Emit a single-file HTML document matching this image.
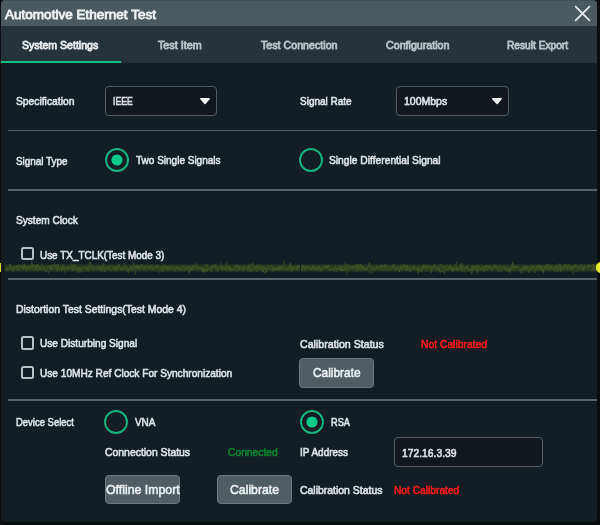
<!DOCTYPE html>
<html><head><meta charset="utf-8"><title>Automotive Ethernet Test</title>
<style>html,body{margin:0;padding:0;}body{width:600px;height:525px;overflow:hidden;position:relative;background:#0a0e10;font-family:"Liberation Sans",sans-serif;}</style>
</head><body>
<div style="position:absolute;left:1px;top:0px;width:596px;height:522px;background:#121e24;border-radius:4px;"></div>
<div style="position:absolute;left:1px;top:0px;width:596px;height:26px;box-sizing:border-box;background:#495b5e;border-top:1px solid #3e5154;border-radius:4px 4px 0 0;"></div>
<div style="position:absolute;left:1px;top:26px;width:596px;height:37px;background:#24343a;"></div>
<div style="position:absolute;left:1px;top:60.5px;width:119.5px;height:2.5px;background:#14c483;"></div>
<svg style="position:absolute;left:0;top:0" width="600" height="525"><defs><filter id="bl" x="-1%" y="-50%" width="102%" height="200%"><feGaussianBlur stdDeviation="0.7"/></filter></defs><g filter="url(#bl)"><rect x="0" y="264.5" width="597" height="7" fill="#2f3d1f" opacity="0.8"/><polyline points="0.0,268.2 1.1,270.1 2.2,266.4 3.3,269.7 4.4,267.6 5.5,267.6 6.6,271.2 7.7,268.3 8.8,267.9 9.9,269.2 11.0,269.9 12.1,267.9 13.2,269.0 14.3,266.3 15.4,267.4 16.5,267.3 17.6,265.7 18.7,265.4 19.8,265.2 20.9,267.6 22.0,267.7 23.1,267.5 24.2,268.1 25.3,265.7 26.4,267.9 27.5,268.4 28.6,269.3 29.7,266.6 30.8,267.3 31.9,264.6 33.0,267.1 34.1,264.3 35.2,265.6 36.3,269.9 37.4,264.3 38.5,269.4 39.6,268.6 40.7,267.5 41.8,268.8 42.9,268.9 44.0,269.8 45.1,267.6 46.2,267.0 47.3,267.0 48.4,266.3 49.5,267.9 50.6,266.7 51.7,269.8 52.8,264.8 53.9,266.1 55.0,266.4 56.1,264.4 57.2,271.2 58.3,263.9 59.4,267.5 60.5,267.1 61.6,270.8 62.7,264.6 63.8,269.8 64.9,266.8 66.0,267.7 67.1,266.9 68.2,269.1 69.3,266.1 70.4,267.9 71.5,268.6 72.6,271.1 73.7,263.9 74.8,270.6 75.9,269.6 77.0,267.2 78.1,268.5 79.2,267.2 80.3,270.8 81.4,268.4 82.5,267.6 83.6,267.6 84.7,267.7 85.8,267.7 86.9,266.5 88.0,271.5 89.1,264.8 90.2,261.9 91.3,267.8 92.4,267.8 93.5,268.6 94.6,267.7 95.7,267.7 96.8,268.6 97.9,269.6 99.0,267.2 100.1,267.4 101.2,271.3 102.3,268.9 103.4,266.3 104.5,272.0 105.6,269.3 106.7,267.0 107.8,266.0 108.9,268.5 110.0,266.6 111.1,266.2 112.2,265.8 113.3,267.1 114.4,269.9 115.5,267.3 116.6,265.5 117.7,269.1 118.8,268.1 119.9,269.4 121.0,270.0 122.1,267.7 123.2,267.8 124.3,267.9 125.4,266.1 126.5,269.1 127.6,270.3 128.7,268.3 129.8,267.6 130.9,267.6 132.0,266.7 133.1,266.6 134.2,267.3 135.3,266.6 136.4,267.3 137.5,265.3 138.6,268.6 139.7,268.1 140.8,266.0 141.9,264.1 143.0,268.0 144.1,269.9 145.2,266.8 146.3,267.2 147.4,267.0 148.5,269.1 149.6,266.4 150.7,269.7 151.8,267.5 152.9,269.6 154.0,268.1 155.1,267.6 156.2,265.5 157.3,266.8 158.4,267.6 159.5,269.1 160.6,268.4 161.7,266.8 162.8,268.7 163.9,269.7 165.0,267.7 166.1,267.3 167.2,267.3 168.3,269.4 169.4,268.9 170.5,266.4 171.6,268.6 172.7,267.2 173.8,266.7 174.9,270.1 176.0,269.4 177.1,266.8 178.2,268.1 179.3,268.9 180.4,266.9 181.5,267.8 182.6,269.1 183.7,265.0 184.8,268.6 185.9,269.3 187.0,268.9 188.1,265.7 189.2,268.5 190.3,266.5 191.4,269.0 192.5,269.0 193.6,268.4 194.7,266.7 195.8,267.0 196.9,269.5 198.0,266.5 199.1,268.8 200.2,268.9 201.3,267.5 202.4,272.1 203.5,268.1 204.6,271.6 205.7,264.6 206.8,264.2 207.9,269.7 209.0,269.1 210.1,267.5 211.2,267.9 212.3,264.8 213.4,266.9 214.5,266.2 215.6,267.6 216.7,269.5 217.8,268.1 218.9,268.6 220.0,266.8 221.1,267.3 222.2,268.2 223.3,267.5 224.4,270.2 225.5,266.5 226.6,271.2 227.7,266.3 228.8,269.8 229.9,266.7 231.0,270.8 232.1,268.2 233.2,268.7 234.3,269.3 235.4,266.9 236.5,266.2 237.6,264.6 238.7,270.1 239.8,266.8 240.9,267.0 242.0,267.9 243.1,271.4 244.2,265.1 245.3,268.4 246.4,267.3 247.5,268.9 248.6,264.9 249.7,267.3 250.8,269.4 251.9,270.7 253.0,270.7 254.1,266.5 255.2,268.1 256.3,267.8 257.4,265.7 258.5,265.6 259.6,269.3 260.7,268.4 261.8,267.8 262.9,270.1 264.0,266.3 265.1,268.9 266.2,268.0 267.3,267.9 268.4,268.8 269.5,268.3 270.6,268.5 271.7,268.5 272.8,271.3 273.9,267.5 275.0,269.7 276.1,269.0 277.2,267.4 278.3,269.4 279.4,266.5 280.5,270.0 281.6,266.6 282.7,267.2 283.8,268.5 284.9,269.4 286.0,269.5 287.1,269.5 288.2,267.6 289.3,266.4 290.4,268.9 291.5,268.5 292.6,266.4 293.7,269.7 294.8,268.3 295.9,266.4 297.0,268.8 298.1,265.7 299.2,266.5 300.3,268.7 301.4,265.4 302.5,268.1 303.6,265.7 304.7,269.3 305.8,266.8 306.9,268.3 308.0,265.4 309.1,267.4 310.2,269.6 311.3,268.8 312.4,264.9 313.5,269.6 314.6,269.5 315.7,267.4 316.8,270.4 317.9,266.2 319.0,267.9 320.1,269.9 321.2,270.2 322.3,270.2 323.4,266.1 324.5,265.0 325.6,268.7 326.7,265.6 327.8,267.8 328.9,265.8 330.0,269.8 331.1,269.4 332.2,268.9 333.3,268.0 334.4,268.1 335.5,267.5 336.6,268.7 337.7,268.4 338.8,268.8 339.9,267.3 341.0,271.2 342.1,268.5 343.2,270.4 344.3,270.3 345.4,266.5 346.5,265.1 347.6,270.1 348.7,267.3 349.8,268.1 350.9,267.6 352.0,268.2 353.1,266.0 354.2,267.8 355.3,267.2 356.4,268.0 357.5,264.0 358.6,269.4 359.7,268.6 360.8,265.1 361.9,266.8 363.0,268.1 364.1,269.1 365.2,268.0 366.3,270.4 367.4,268.0 368.5,266.3 369.6,266.9 370.7,269.3 371.8,267.0 372.9,269.4 374.0,269.7 375.1,269.0 376.2,269.7 377.3,267.7 378.4,268.0 379.5,267.0 380.6,267.0 381.7,265.3 382.8,267.1 383.9,266.2 385.0,265.6 386.1,268.2 387.2,268.8 388.3,267.4 389.4,270.3 390.5,269.6 391.6,269.8 392.7,267.0 393.8,265.5 394.9,268.9 396.0,268.5 397.1,269.2 398.2,268.7 399.3,270.1 400.4,267.5 401.5,269.1 402.6,266.5 403.7,264.1 404.8,267.2 405.9,270.5 407.0,265.2 408.1,269.7 409.2,266.8 410.3,267.3 411.4,268.1 412.5,268.4 413.6,266.3 414.7,268.2 415.8,268.8 416.9,269.4 418.0,266.7 419.1,270.6 420.2,271.2 421.3,272.1 422.4,265.7 423.5,268.3 424.6,264.8 425.7,268.6 426.8,268.9 427.9,266.0 429.0,265.3 430.1,268.3 431.2,269.1 432.3,266.7 433.4,267.6 434.5,263.7 435.6,266.8 436.7,268.2 437.8,268.3 438.9,270.7 440.0,266.1 441.1,264.2 442.2,268.8 443.3,267.0 444.4,268.5 445.5,269.2 446.6,269.0 447.7,270.5 448.8,270.3 449.9,265.2 451.0,267.9 452.1,271.4 453.2,267.3 454.3,269.6 455.4,267.9 456.5,267.3 457.6,270.7 458.7,269.8 459.8,267.6 460.9,269.5 462.0,265.8 463.1,266.8 464.2,269.5 465.3,268.1 466.4,266.2 467.5,268.8 468.6,268.6 469.7,270.2 470.8,269.6 471.9,267.5 473.0,267.2 474.1,267.8 475.2,267.6 476.3,270.5 477.4,270.7 478.5,270.3 479.6,268.6 480.7,267.6 481.8,269.5 482.9,267.4 484.0,268.4 485.1,265.2 486.2,267.3 487.3,270.4 488.4,266.3 489.5,265.5 490.6,267.7 491.7,270.8 492.8,270.5 493.9,267.4 495.0,267.2 496.1,267.8 497.2,266.4 498.3,268.1 499.4,267.5 500.5,265.5 501.6,267.0 502.7,267.6 503.8,266.5 504.9,266.1 506.0,269.5 507.1,271.2 508.2,267.5 509.3,267.3 510.4,268.9 511.5,267.6 512.6,266.7 513.7,270.4 514.8,266.2 515.9,266.8 517.0,266.9 518.1,266.5 519.2,267.6 520.3,269.0 521.4,270.5 522.5,269.1 523.6,268.1 524.7,265.9 525.8,267.9 526.9,266.4 528.0,267.8 529.1,269.7 530.2,268.3 531.3,267.6 532.4,266.7 533.5,268.0 534.6,268.2 535.7,266.4 536.8,267.1 537.9,269.5 539.0,265.2 540.1,267.2 541.2,266.0 542.3,270.6 543.4,269.0 544.5,268.9 545.6,268.7 546.7,268.5 547.8,268.5 548.9,265.3 550.0,268.4 551.1,269.0 552.2,265.6 553.3,269.4 554.4,269.1 555.5,265.4 556.6,267.2 557.7,267.5 558.8,267.1 559.9,268.7 561.0,265.8 562.1,267.6 563.2,268.4 564.3,269.2 565.4,268.1 566.5,267.6 567.6,269.2 568.7,264.6 569.8,269.6 570.9,267.5 572.0,265.9 573.1,267.3 574.2,264.9 575.3,264.5 576.4,267.4 577.5,266.7 578.6,269.2 579.7,266.5 580.8,265.8 581.9,266.4 583.0,270.9 584.1,268.0 585.2,267.0 586.3,266.3 587.4,266.1 588.5,267.7 589.6,268.7 590.7,270.0 591.8,269.9 592.9,268.5 594.0,266.9 595.1,266.5 596.2,264.1" fill="none" stroke="#465826" stroke-width="1" opacity="0.8"/><polyline points="0.0,266.0 1.1,268.8 2.2,267.3 3.3,268.7 4.4,265.3 5.5,269.8 6.6,268.6 7.7,268.1 8.8,268.8 9.9,263.5 11.0,266.9 12.1,266.2 13.2,271.6 14.3,267.6 15.4,267.0 16.5,269.7 17.6,265.9 18.7,270.8 19.8,266.6 20.9,267.9 22.0,266.2 23.1,269.6 24.2,263.7 25.3,269.4 26.4,266.4 27.5,268.1 28.6,265.7 29.7,268.5 30.8,268.4 31.9,269.2 33.0,268.6 34.1,269.2 35.2,270.0 36.3,267.2 37.4,265.6 38.5,265.4 39.6,269.4 40.7,267.2 41.8,270.1 42.9,268.1 44.0,266.0 45.1,269.8 46.2,271.9 47.3,267.6 48.4,266.1 49.5,266.3 50.6,269.8 51.7,266.8 52.8,267.2 53.9,269.4 55.0,268.0 56.1,268.2 57.2,266.9 58.3,266.7 59.4,268.3 60.5,268.3 61.6,269.2 62.7,267.0 63.8,268.7 64.9,269.0 66.0,268.2 67.1,269.1 68.2,270.0 69.3,268.4 70.4,268.2 71.5,266.1 72.6,268.7 73.7,267.8 74.8,267.4 75.9,266.3 77.0,269.1 78.1,273.1 79.2,268.9 80.3,268.2 81.4,268.9 82.5,266.8 83.6,268.2 84.7,266.7 85.8,266.7 86.9,268.5 88.0,268.5 89.1,267.8 90.2,266.4 91.3,268.5 92.4,265.8 93.5,269.5 94.6,267.3 95.7,268.0 96.8,269.6 97.9,269.1 99.0,265.4 100.1,267.5 101.2,268.7 102.3,265.8 103.4,263.2 104.5,267.9 105.6,267.9 106.7,268.9 107.8,268.2 108.9,268.3 110.0,268.5 111.1,270.7 112.2,269.0 113.3,269.1 114.4,267.2 115.5,270.2 116.6,267.6 117.7,269.5 118.8,263.8 119.9,268.5 121.0,267.8 122.1,267.1 123.2,270.6 124.3,268.8 125.4,267.7 126.5,267.0 127.6,271.8 128.7,269.5 129.8,269.3 130.9,266.5 132.0,270.6 133.1,269.1 134.2,267.5 135.3,267.8 136.4,264.8 137.5,269.3 138.6,265.8 139.7,269.7 140.8,267.1 141.9,266.8 143.0,268.7 144.1,268.4 145.2,265.7 146.3,267.9 147.4,269.2 148.5,267.5 149.6,265.3 150.7,267.5 151.8,266.1 152.9,266.8 154.0,268.1 155.1,267.9 156.2,267.6 157.3,264.7 158.4,268.7 159.5,267.6 160.6,267.2 161.7,268.3 162.8,271.8 163.9,265.4 165.0,264.8 166.1,269.5 167.2,266.4 168.3,270.6 169.4,266.0 170.5,267.0 171.6,269.7 172.7,269.8 173.8,268.9 174.9,268.9 176.0,267.7 177.1,267.1 178.2,267.6 179.3,270.5 180.4,269.4 181.5,268.0 182.6,268.6 183.7,269.7 184.8,270.4 185.9,267.7 187.0,267.8 188.1,268.7 189.2,273.2 190.3,268.5 191.4,270.5 192.5,264.9 193.6,269.7 194.7,265.2 195.8,265.9 196.9,266.7 198.0,267.7 199.1,268.4 200.2,268.7 201.3,268.4 202.4,267.1 203.5,273.2 204.6,268.8 205.7,269.3 206.8,272.0 207.9,269.9 209.0,269.1 210.1,268.6 211.2,271.7 212.3,265.9 213.4,266.1 214.5,268.3 215.6,264.0 216.7,266.5 217.8,270.2 218.9,267.1 220.0,268.3 221.1,269.4 222.2,265.7 223.3,268.5 224.4,266.8 225.5,265.8 226.6,267.5 227.7,267.9 228.8,267.2 229.9,266.7 231.0,269.9 232.1,270.3 233.2,269.1 234.3,267.8 235.4,265.9 236.5,266.4 237.6,265.8 238.7,268.4 239.8,269.8 240.9,269.8 242.0,268.0 243.1,267.2 244.2,268.4 245.3,268.2 246.4,269.2 247.5,270.9 248.6,266.6 249.7,272.1 250.8,263.8 251.9,264.5 253.0,265.0 254.1,266.0 255.2,267.5 256.3,272.1 257.4,266.6 258.5,270.2 259.6,267.3 260.7,268.3 261.8,266.0 262.9,272.5 264.0,267.9 265.1,266.8 266.2,272.5 267.3,268.4 268.4,268.8 269.5,267.7 270.6,266.4 271.7,265.2 272.8,267.7 273.9,271.2 275.0,268.8 276.1,267.7 277.2,270.1 278.3,266.2 279.4,270.7 280.5,268.0 281.6,266.4 282.7,269.3 283.8,269.0 284.9,267.3 286.0,268.4 287.1,269.9 288.2,270.8 289.3,266.3 290.4,262.8 291.5,272.1 292.6,267.5 293.7,267.2 294.8,268.9 295.9,267.2 297.0,270.1 298.1,265.5 299.2,267.6 300.3,265.5 301.4,271.0 302.5,267.5 303.6,270.2 304.7,270.7 305.8,265.6 306.9,267.6 308.0,269.4 309.1,268.1 310.2,267.7 311.3,269.7 312.4,269.8 313.5,266.8 314.6,267.7 315.7,269.3 316.8,268.4 317.9,268.3 319.0,265.8 320.1,271.5 321.2,267.5 322.3,268.5 323.4,267.9 324.5,268.1 325.6,268.3 326.7,266.3 327.8,268.7 328.9,270.4 330.0,268.8 331.1,269.4 332.2,269.0 333.3,268.1 334.4,271.6 335.5,266.6 336.6,268.8 337.7,270.0 338.8,268.6 339.9,265.9 341.0,265.8 342.1,271.1 343.2,266.1 344.3,268.0 345.4,269.1 346.5,268.2 347.6,264.5 348.7,264.2 349.8,267.8 350.9,266.5 352.0,267.5 353.1,268.2 354.2,268.3 355.3,265.3 356.4,264.7 357.5,269.9 358.6,266.8 359.7,265.7 360.8,264.0 361.9,269.1 363.0,265.5 364.1,265.9 365.2,269.2 366.3,268.6 367.4,269.1 368.5,265.5 369.6,262.3 370.7,266.0 371.8,267.4 372.9,266.7 374.0,269.8 375.1,268.7 376.2,265.9 377.3,269.1 378.4,267.7 379.5,267.0 380.6,270.2 381.7,264.7 382.8,270.1 383.9,270.2 385.0,263.9 386.1,267.6 387.2,267.7 388.3,265.7 389.4,266.9 390.5,266.4 391.6,268.1 392.7,266.9 393.8,263.7 394.9,270.4 396.0,269.8 397.1,266.3 398.2,269.7 399.3,272.0 400.4,264.9 401.5,267.2 402.6,267.0 403.7,269.1 404.8,267.4 405.9,265.2 407.0,270.5 408.1,267.4 409.2,269.5 410.3,272.6 411.4,266.5 412.5,267.2 413.6,269.8 414.7,267.8 415.8,269.0 416.9,268.0 418.0,273.6 419.1,269.3 420.2,268.7 421.3,268.3 422.4,268.8 423.5,264.7 424.6,267.5 425.7,269.5 426.8,265.6 427.9,268.1 429.0,267.8 430.1,267.0 431.2,273.0 432.3,269.4 433.4,268.7 434.5,266.4 435.6,268.2 436.7,267.4 437.8,267.8 438.9,268.4 440.0,273.0 441.1,270.7 442.2,271.4 443.3,270.7 444.4,273.7 445.5,266.7 446.6,265.4 447.7,268.4 448.8,268.5 449.9,268.1 451.0,266.8 452.1,269.4 453.2,271.5 454.3,268.4 455.4,267.6 456.5,270.4 457.6,267.4 458.7,267.3 459.8,268.6 460.9,263.4 462.0,271.8 463.1,267.8 464.2,269.0 465.3,268.6 466.4,268.8 467.5,265.3 468.6,271.6 469.7,269.2 470.8,268.6 471.9,274.3 473.0,265.5 474.1,269.5 475.2,267.8 476.3,265.0 477.4,271.9 478.5,264.9 479.6,268.3 480.7,267.8 481.8,268.4 482.9,266.1 484.0,270.7 485.1,268.5 486.2,265.5 487.3,265.6 488.4,268.6 489.5,265.7 490.6,268.9 491.7,268.7 492.8,266.8 493.9,264.1 495.0,265.4 496.1,268.7 497.2,267.0 498.3,271.7 499.4,267.1 500.5,268.8 501.6,269.4 502.7,268.2 503.8,268.6 504.9,270.0 506.0,267.7 507.1,268.7 508.2,267.3 509.3,272.0 510.4,268.4 511.5,269.7 512.6,262.1 513.7,267.0 514.8,265.8 515.9,268.1 517.0,267.1 518.1,265.9 519.2,267.5 520.3,269.6 521.4,270.2 522.5,266.9 523.6,270.1 524.7,266.8 525.8,269.2 526.9,266.3 528.0,270.1 529.1,272.7 530.2,267.4 531.3,270.5 532.4,265.1 533.5,266.7 534.6,273.3 535.7,267.9 536.8,269.0 537.9,264.8 539.0,268.0 540.1,266.4 541.2,270.4 542.3,266.9 543.4,273.1 544.5,265.8 545.6,268.7 546.7,264.0 547.8,267.2 548.9,270.4 550.0,267.8 551.1,265.4 552.2,269.0 553.3,269.9 554.4,268.9 555.5,270.0 556.6,265.2 557.7,271.7 558.8,269.4 559.9,263.8 561.0,271.8 562.1,267.1 563.2,269.0 564.3,264.0 565.4,266.7 566.5,264.4 567.6,269.7 568.7,267.5 569.8,266.2 570.9,267.3 572.0,270.3 573.1,266.4 574.2,269.1 575.3,265.6 576.4,264.7 577.5,267.0 578.6,267.4 579.7,268.4 580.8,269.9 581.9,267.2 583.0,267.3 584.1,269.5 585.2,268.9 586.3,267.9 587.4,268.5 588.5,263.6 589.6,266.9 590.7,264.8 591.8,267.3 592.9,269.8 594.0,264.6 595.1,269.8 596.2,266.9" fill="none" stroke="#4c5e2a" stroke-width="1" opacity="0.6"/><polyline points="0.0,267.5 1.1,266.9 2.2,269.7 3.3,266.4 4.4,263.0 5.5,268.8 6.6,267.6 7.7,269.5 8.8,269.4 9.9,265.1 11.0,268.5 12.1,268.3 13.2,267.8 14.3,268.2 15.4,268.8 16.5,266.7 17.6,267.6 18.7,270.4 19.8,265.5 20.9,267.8 22.0,265.6 23.1,265.5 24.2,267.0 25.3,268.4 26.4,271.6 27.5,267.5 28.6,270.2 29.7,269.3 30.8,268.2 31.9,260.6 33.0,268.3 34.1,268.1 35.2,265.5 36.3,268.3 37.4,271.5 38.5,265.2 39.6,266.8 40.7,270.2 41.8,263.7 42.9,265.5 44.0,268.7 45.1,270.3 46.2,270.9 47.3,269.8 48.4,273.5 49.5,268.9 50.6,264.9 51.7,267.5 52.8,269.5 53.9,268.9 55.0,263.4 56.1,268.9 57.2,266.1 58.3,267.5 59.4,271.5 60.5,267.6 61.6,266.4 62.7,267.7 63.8,266.5 64.9,272.9 66.0,270.0 67.1,270.2 68.2,266.4 69.3,266.5 70.4,268.6 71.5,262.8 72.6,270.5 73.7,264.9 74.8,268.2 75.9,268.8 77.0,266.1 78.1,268.9 79.2,269.7 80.3,272.6 81.4,268.9 82.5,272.4 83.6,269.1 84.7,267.5 85.8,270.1 86.9,266.8 88.0,268.4 89.1,269.5 90.2,270.7 91.3,268.7 92.4,264.5 93.5,271.1 94.6,268.4 95.7,267.3 96.8,266.1 97.9,269.4 99.0,268.8 100.1,269.6 101.2,267.7 102.3,271.7 103.4,267.4 104.5,269.0 105.6,268.5 106.7,270.5 107.8,266.3 108.9,267.3 110.0,267.5 111.1,266.4 112.2,266.4 113.3,265.1 114.4,269.8 115.5,271.6 116.6,265.6 117.7,269.8 118.8,265.2 119.9,266.1 121.0,267.2 122.1,268.3 123.2,269.1 124.3,263.4 125.4,264.8 126.5,268.2 127.6,267.4 128.7,273.1 129.8,267.3 130.9,266.4 132.0,270.9 133.1,261.6 134.2,263.5 135.3,274.5 136.4,266.5 137.5,268.2 138.6,267.5 139.7,265.9 140.8,267.6 141.9,264.8 143.0,270.3 144.1,269.8 145.2,269.6 146.3,265.8 147.4,263.4 148.5,266.8 149.6,265.4 150.7,268.9 151.8,264.1 152.9,265.8 154.0,268.3 155.1,269.0 156.2,268.2 157.3,265.0 158.4,266.4 159.5,272.8 160.6,270.2 161.7,266.0 162.8,272.6 163.9,267.7 165.0,268.0 166.1,266.0 167.2,271.6 168.3,268.2 169.4,267.8 170.5,265.8 171.6,264.9 172.7,268.4 173.8,268.0 174.9,271.7 176.0,265.8 177.1,267.1 178.2,270.4 179.3,269.9 180.4,266.4 181.5,271.5 182.6,269.1 183.7,270.1 184.8,268.8 185.9,270.3 187.0,267.0 188.1,267.5 189.2,270.6 190.3,268.9 191.4,268.9 192.5,270.7 193.6,268.6 194.7,269.0 195.8,262.7 196.9,266.7 198.0,270.0 199.1,265.9 200.2,267.3 201.3,268.5 202.4,267.7 203.5,270.1 204.6,269.1 205.7,267.6 206.8,270.6 207.9,267.1 209.0,266.3 210.1,268.8 211.2,269.5 212.3,267.6 213.4,265.4 214.5,266.8 215.6,268.5 216.7,269.6 217.8,272.2 218.9,267.6 220.0,267.5 221.1,262.8 222.2,271.0 223.3,270.2 224.4,268.0 225.5,266.3 226.6,261.7 227.7,269.7 228.8,266.1 229.9,271.6 231.0,269.8 232.1,271.1 233.2,267.7 234.3,270.8 235.4,264.6 236.5,271.5 237.6,267.9 238.7,265.2 239.8,267.0 240.9,265.7 242.0,268.6 243.1,266.3 244.2,264.9 245.3,267.1 246.4,267.4 247.5,268.5 248.6,269.7 249.7,271.0 250.8,269.0 251.9,271.9 253.0,262.1 254.1,267.8 255.2,270.2 256.3,264.8 257.4,267.5 258.5,268.5 259.6,264.3 260.7,266.6 261.8,269.4 262.9,267.2 264.0,271.7 265.1,273.7 266.2,267.8 267.3,265.2 268.4,267.9 269.5,266.6 270.6,264.6 271.7,267.0 272.8,266.9 273.9,267.1 275.0,270.2 276.1,270.5 277.2,269.0 278.3,267.1 279.4,269.0 280.5,268.0 281.6,268.5 282.7,265.7 283.8,260.6 284.9,270.1 286.0,266.6 287.1,266.8 288.2,268.0 289.3,267.9 290.4,267.3 291.5,271.6 292.6,268.3 293.7,268.5 294.8,265.9 295.9,267.8 297.0,269.1 298.1,267.8 299.2,268.8 300.3,265.7 301.4,268.9 302.5,265.6 303.6,266.9 304.7,266.1 305.8,268.4 306.9,270.6 308.0,268.7 309.1,265.9 310.2,268.3 311.3,270.5 312.4,269.7 313.5,269.2 314.6,265.3 315.7,266.7 316.8,266.4 317.9,266.9 319.0,268.5 320.1,268.1 321.2,267.2 322.3,269.3 323.4,266.3 324.5,267.2 325.6,268.2 326.7,264.8 327.8,266.0 328.9,264.7 330.0,265.5 331.1,267.7 332.2,267.7 333.3,268.8 334.4,268.8 335.5,265.3 336.6,272.4 337.7,271.2 338.8,265.1 339.9,266.3 341.0,266.8 342.1,268.5 343.2,269.5 344.3,268.0 345.4,261.9 346.5,274.8 347.6,270.0 348.7,270.0 349.8,266.2 350.9,268.2 352.0,270.2 353.1,266.9 354.2,270.7 355.3,268.2 356.4,271.8 357.5,268.1 358.6,271.5 359.7,264.2 360.8,271.4 361.9,269.1 363.0,267.1 364.1,270.6 365.2,267.4 366.3,269.9 367.4,270.3 368.5,270.5 369.6,273.3 370.7,271.3 371.8,274.0 372.9,269.7 374.0,268.4 375.1,268.9 376.2,267.9 377.3,265.0 378.4,268.3 379.5,265.2 380.6,267.3 381.7,267.3 382.8,266.7 383.9,265.4 385.0,268.3 386.1,267.9 387.2,271.3 388.3,269.5 389.4,270.2 390.5,266.9 391.6,267.3 392.7,265.0 393.8,265.9 394.9,269.7 396.0,267.5 397.1,267.7 398.2,266.7 399.3,271.7 400.4,267.9 401.5,270.7 402.6,267.9 403.7,270.3 404.8,265.7 405.9,264.8 407.0,270.6 408.1,267.3 409.2,268.6 410.3,270.1 411.4,269.7 412.5,268.6 413.6,265.2 414.7,266.3 415.8,268.1 416.9,269.5 418.0,269.2 419.1,268.9 420.2,266.2 421.3,268.0 422.4,270.3 423.5,265.9 424.6,266.6 425.7,270.2 426.8,271.8 427.9,269.0 429.0,268.0 430.1,265.7 431.2,267.7 432.3,266.1 433.4,268.3 434.5,269.7 435.6,269.1 436.7,271.1 437.8,265.6 438.9,265.0 440.0,271.3 441.1,270.5 442.2,265.7 443.3,268.3 444.4,265.4 445.5,268.0 446.6,268.7 447.7,270.3 448.8,265.7 449.9,265.0 451.0,269.4 452.1,267.2 453.2,271.3 454.3,265.3 455.4,266.5 456.5,261.5 457.6,270.7 458.7,271.2 459.8,269.0 460.9,267.3 462.0,263.2 463.1,264.7 464.2,266.7 465.3,272.5 466.4,270.1 467.5,266.6 468.6,269.0 469.7,269.3 470.8,269.2 471.9,265.8 473.0,267.0 474.1,270.4 475.2,269.7 476.3,267.2 477.4,273.8 478.5,268.7 479.6,267.0 480.7,270.2 481.8,269.9 482.9,267.7 484.0,272.3 485.1,270.6 486.2,268.1 487.3,269.7 488.4,269.6 489.5,267.3 490.6,269.8 491.7,266.7 492.8,267.5 493.9,269.6 495.0,265.0 496.1,267.2 497.2,265.7 498.3,269.7 499.4,266.6 500.5,272.4 501.6,271.7 502.7,266.4 503.8,268.4 504.9,267.2 506.0,268.0 507.1,269.6 508.2,271.6 509.3,273.2 510.4,272.4 511.5,265.0 512.6,266.9 513.7,267.6 514.8,267.3 515.9,268.4 517.0,269.6 518.1,266.9 519.2,266.6 520.3,273.6 521.4,269.7 522.5,273.2 523.6,266.7 524.7,271.3 525.8,272.0 526.9,271.2 528.0,266.2 529.1,269.3 530.2,266.2 531.3,265.3 532.4,268.0 533.5,269.2 534.6,267.5 535.7,267.8 536.8,269.5 537.9,266.4 539.0,269.0 540.1,269.9 541.2,269.6 542.3,269.4 543.4,265.6 544.5,267.3 545.6,267.0 546.7,269.7 547.8,263.8 548.9,268.4 550.0,264.2 551.1,269.6 552.2,266.8 553.3,268.1 554.4,270.2 555.5,272.1 556.6,265.7 557.7,268.3 558.8,263.4 559.9,267.5 561.0,266.4 562.1,269.6 563.2,267.8 564.3,268.3 565.4,265.4 566.5,267.2 567.6,265.4 568.7,268.1 569.8,264.3 570.9,268.7 572.0,270.6 573.1,274.2 574.2,271.6 575.3,271.2 576.4,269.9 577.5,271.8 578.6,267.9 579.7,269.0 580.8,263.6 581.9,266.8 583.0,270.8 584.1,263.9 585.2,268.8 586.3,267.9 587.4,267.2 588.5,268.8 589.6,268.1 590.7,265.4 591.8,267.8 592.9,263.7 594.0,271.6 595.1,268.0 596.2,270.1" fill="none" stroke="#3e4f26" stroke-width="1" opacity="0.6"/></g></svg>
<div style="position:absolute;left:596px;top:262px;width:5px;height:11px;background:#ecee28;border-radius:5px 0 0 5px;"></div>
<div style="position:absolute;left:0px;top:263px;width:2px;height:9px;background:#d8dc30;"></div>
<div style="position:absolute;left:1px;top:63px;width:4px;height:458px;background:#161d1e;"></div>
<div style="position:absolute;left:299.5px;top:63px;width:1px;height:459px;background:#142127;"></div>
<div style="position:absolute;left:8px;top:129.5px;width:589px;height:1.6px;background:#56646a;"></div>
<div style="position:absolute;left:8px;top:189px;width:589px;height:1.6px;background:#56646a;"></div>
<div style="position:absolute;left:8px;top:278px;width:589px;height:1.6px;background:#56646a;"></div>
<div style="position:absolute;left:8px;top:399px;width:589px;height:1.6px;background:#56646a;"></div>
<div style="position:absolute;left:105px;top:86px;width:112px;height:29.5px;box-sizing:border-box;background:#12171e;border:1.3px solid #535d61;border-radius:4px;"></div>
<div style="position:absolute;left:396px;top:86px;width:112.5px;height:29.5px;box-sizing:border-box;background:#12171e;border:1.3px solid #535d61;border-radius:4px;"></div>
<div style="position:absolute;left:393.8px;top:436.8px;width:149.2px;height:30.19999999999999px;box-sizing:border-box;background:#12171e;border:1.3px solid #535d61;border-radius:4px;"></div>
<svg style="position:absolute;left:199px;top:97.2px" width="12" height="7.799999999999997"><path d="M1.8,1.8 L10.2,1.8 L6.0,6.399999999999997 Z" fill="#f2f4f4" stroke="#f2f4f4" stroke-width="1.5" stroke-linejoin="round"/></svg>
<svg style="position:absolute;left:491px;top:97.2px" width="12" height="7.799999999999997"><path d="M1.8,1.8 L10.2,1.8 L6.0,6.399999999999997 Z" fill="#f2f4f4" stroke="#f2f4f4" stroke-width="1.5" stroke-linejoin="round"/></svg>
<svg style="position:absolute;left:103.5px;top:147.4px" width="26" height="26"><circle cx="13" cy="13" r="11" fill="none" stroke="#17b57c" stroke-width="1.9"/><circle cx="13" cy="13" r="5.6" fill="#0acb88"/></svg>
<svg style="position:absolute;left:297.5px;top:147.4px" width="26" height="26"><circle cx="13" cy="13" r="11" fill="none" stroke="#17b57c" stroke-width="1.9"/></svg>
<svg style="position:absolute;left:103.3px;top:409.3px" width="26" height="26"><circle cx="13" cy="13" r="11" fill="none" stroke="#17b57c" stroke-width="1.9"/></svg>
<svg style="position:absolute;left:298.8px;top:408.9px" width="26" height="26"><circle cx="13" cy="13" r="11" fill="none" stroke="#17b57c" stroke-width="1.9"/><circle cx="13" cy="13" r="5.6" fill="#0acb88"/></svg>
<div style="position:absolute;left:21px;top:247.2px;width:13.3px;height:13.3px;box-sizing:border-box;border:2.1px solid #b9c1c4;border-radius:2.5px;"></div>
<div style="position:absolute;left:20.9px;top:336.4px;width:13.3px;height:13.3px;box-sizing:border-box;border:2.1px solid #b9c1c4;border-radius:2.5px;"></div>
<div style="position:absolute;left:20.9px;top:366px;width:13.3px;height:13.3px;box-sizing:border-box;border:2.1px solid #b9c1c4;border-radius:2.5px;"></div>
<div style="position:absolute;left:299px;top:358.2px;width:75px;height:30.0px;box-sizing:border-box;background:#4e5e62;border:1px solid #6e7b7e;border-radius:4px;"></div>
<div style="position:absolute;left:104.6px;top:475px;width:75.4px;height:29.399999999999977px;box-sizing:border-box;background:#4e5e62;border:1px solid #6e7b7e;border-radius:4px;"></div>
<div style="position:absolute;left:216.7px;top:474.8px;width:75.30000000000001px;height:29.69999999999999px;box-sizing:border-box;background:#4e5e62;border:1px solid #6e7b7e;border-radius:4px;"></div>
<svg style="position:absolute;left:570px;top:2px" width="26" height="24"><path d="M5.7,4.6 L19.4,18.3 M19.4,4.6 L5.7,18.3" stroke="#e9eeee" stroke-width="1.7" stroke-linecap="round"/></svg>
<div style="position:absolute;left:5px;top:8.3px;font-family:'Liberation Sans',sans-serif;font-weight:normal;font-size:13px;line-height:13px;transform:scaleX(1.0411);transform-origin:0 0;-webkit-text-stroke:0.8px #eef2f2;white-space:nowrap;color:#eef2f2">Automotive Ethernet Test</div>
<div style="position:absolute;left:21.8px;top:39.8px;font-family:'Liberation Sans',sans-serif;font-weight:normal;font-size:10.5px;line-height:10.5px;transform:scaleX(1.0039);transform-origin:0 0;-webkit-text-stroke:0.8px #e8eced;white-space:nowrap;color:#e8eced">System Settings</div>
<div style="position:absolute;left:158px;top:39.8px;font-family:'Liberation Sans',sans-serif;font-weight:normal;font-size:10.5px;line-height:10.5px;transform:scaleX(1.0233);transform-origin:0 0;-webkit-text-stroke:0.8px #b9c3c6;white-space:nowrap;color:#b9c3c6">Test Item</div>
<div style="position:absolute;left:261px;top:39.8px;font-family:'Liberation Sans',sans-serif;font-weight:normal;font-size:10.5px;line-height:10.5px;transform:scaleX(1.0161);transform-origin:0 0;-webkit-text-stroke:0.8px #b9c3c6;white-space:nowrap;color:#b9c3c6">Test Connection</div>
<div style="position:absolute;left:386px;top:39.8px;font-family:'Liberation Sans',sans-serif;font-weight:normal;font-size:10.5px;line-height:10.5px;transform:scaleX(1.0164);transform-origin:0 0;-webkit-text-stroke:0.8px #b9c3c6;white-space:nowrap;color:#b9c3c6">Configuration</div>
<div style="position:absolute;left:506.8px;top:39.8px;font-family:'Liberation Sans',sans-serif;font-weight:normal;font-size:10.5px;line-height:10.5px;transform:scaleX(0.9687);transform-origin:0 0;-webkit-text-stroke:0.8px #b9c3c6;white-space:nowrap;color:#b9c3c6">Result Export</div>
<div style="position:absolute;left:16px;top:96px;font-family:'Liberation Sans',sans-serif;font-weight:normal;font-size:11.5px;line-height:11.5px;transform:scaleX(0.8955);transform-origin:0 0;-webkit-text-stroke:0.6px #dfe4e6;white-space:nowrap;color:#dfe4e6">Specification</div>
<div style="position:absolute;left:113.4px;top:96.3px;font-family:'Liberation Sans',sans-serif;font-weight:normal;font-size:11.5px;line-height:11.5px;transform:scaleX(0.7548);transform-origin:0 0;-webkit-text-stroke:0.6px #dfe4e6;white-space:nowrap;color:#dfe4e6">IEEE</div>
<div style="position:absolute;left:299.6px;top:96px;font-family:'Liberation Sans',sans-serif;font-weight:normal;font-size:11.5px;line-height:11.5px;transform:scaleX(0.8685);transform-origin:0 0;-webkit-text-stroke:0.6px #dfe4e6;white-space:nowrap;color:#dfe4e6">Signal Rate</div>
<div style="position:absolute;left:403.8px;top:96.3px;font-family:'Liberation Sans',sans-serif;font-weight:normal;font-size:11.5px;line-height:11.5px;transform:scaleX(0.9129);transform-origin:0 0;-webkit-text-stroke:0.6px #dfe4e6;white-space:nowrap;color:#dfe4e6">100Mbps</div>
<div style="position:absolute;left:15.8px;top:155.5px;font-family:'Liberation Sans',sans-serif;font-weight:normal;font-size:11.5px;line-height:11.5px;transform:scaleX(0.8601);transform-origin:0 0;-webkit-text-stroke:0.6px #dfe4e6;white-space:nowrap;color:#dfe4e6">Signal Type</div>
<div style="position:absolute;left:136px;top:155.0px;font-family:'Liberation Sans',sans-serif;font-weight:normal;font-size:11.5px;line-height:11.5px;transform:scaleX(0.87);transform-origin:0 0;-webkit-text-stroke:0.6px #dfe4e6;white-space:nowrap;color:#dfe4e6">Two Single Signals</div>
<div style="position:absolute;left:329.2px;top:155.0px;font-family:'Liberation Sans',sans-serif;font-weight:normal;font-size:11.5px;line-height:11.5px;transform:scaleX(0.892);transform-origin:0 0;-webkit-text-stroke:0.6px #dfe4e6;white-space:nowrap;color:#dfe4e6">Single Differential Signal</div>
<div style="position:absolute;left:15.6px;top:215px;font-family:'Liberation Sans',sans-serif;font-weight:normal;font-size:11.5px;line-height:11.5px;transform:scaleX(0.879);transform-origin:0 0;-webkit-text-stroke:0.6px #dfe4e6;white-space:nowrap;color:#dfe4e6">System Clock</div>
<div style="position:absolute;left:40px;top:250.2px;font-family:'Liberation Sans',sans-serif;font-weight:normal;font-size:11.5px;line-height:11.5px;transform:scaleX(0.8626);transform-origin:0 0;-webkit-text-stroke:0.6px #dfe4e6;white-space:nowrap;color:#dfe4e6">Use TX_TCLK(Test Mode 3)</div>
<div style="position:absolute;left:15.8px;top:303.6px;font-family:'Liberation Sans',sans-serif;font-weight:normal;font-size:11.5px;line-height:11.5px;transform:scaleX(0.9061);transform-origin:0 0;-webkit-text-stroke:0.6px #dfe4e6;white-space:nowrap;color:#dfe4e6">Distortion Test Settings(Test Mode 4)</div>
<div style="position:absolute;left:40px;top:338.0px;font-family:'Liberation Sans',sans-serif;font-weight:normal;font-size:11.5px;line-height:11.5px;transform:scaleX(0.8784);transform-origin:0 0;-webkit-text-stroke:0.6px #dfe4e6;white-space:nowrap;color:#dfe4e6">Use Disturbing Signal</div>
<div style="position:absolute;left:40px;top:367.6px;font-family:'Liberation Sans',sans-serif;font-weight:normal;font-size:11.5px;line-height:11.5px;transform:scaleX(0.879);transform-origin:0 0;-webkit-text-stroke:0.6px #dfe4e6;white-space:nowrap;color:#dfe4e6">Use 10MHz Ref Clock For Synchronization</div>
<div style="position:absolute;left:299.5px;top:338.6px;font-family:'Liberation Sans',sans-serif;font-weight:normal;font-size:11.5px;line-height:11.5px;transform:scaleX(0.9231);transform-origin:0 0;-webkit-text-stroke:0.6px #dfe4e6;white-space:nowrap;color:#dfe4e6">Calibration Status</div>
<div style="position:absolute;left:420.5px;top:338.6px;font-family:'Liberation Sans',sans-serif;font-weight:normal;font-size:11.5px;line-height:11.5px;transform:scaleX(0.8975);transform-origin:0 0;-webkit-text-stroke:0.6px #ff1a1a;white-space:nowrap;color:#ff1a1a">Not Calibrated</div>
<div style="position:absolute;left:312.7px;top:366.2px;font-family:'Liberation Sans',sans-serif;font-weight:normal;font-size:13px;line-height:13px;transform:scaleX(0.9136);transform-origin:0 0;-webkit-text-stroke:0.55px #eef2f2;white-space:nowrap;color:#eef2f2">Calibrate</div>
<div style="position:absolute;left:16px;top:417.2px;font-family:'Liberation Sans',sans-serif;font-weight:normal;font-size:11.5px;line-height:11.5px;transform:scaleX(0.824);transform-origin:0 0;-webkit-text-stroke:0.6px #dfe4e6;white-space:nowrap;color:#dfe4e6">Device Select</div>
<div style="position:absolute;left:135.2px;top:417px;font-family:'Liberation Sans',sans-serif;font-weight:normal;font-size:11.5px;line-height:11.5px;transform:scaleX(0.8626);transform-origin:0 0;-webkit-text-stroke:0.6px #dfe4e6;white-space:nowrap;color:#dfe4e6">VNA</div>
<div style="position:absolute;left:331.4px;top:417px;font-family:'Liberation Sans',sans-serif;font-weight:normal;font-size:11.5px;line-height:11.5px;transform:scaleX(0.8042);transform-origin:0 0;-webkit-text-stroke:0.6px #dfe4e6;white-space:nowrap;color:#dfe4e6">RSA</div>
<div style="position:absolute;left:105px;top:447px;font-family:'Liberation Sans',sans-serif;font-weight:normal;font-size:11.5px;line-height:11.5px;transform:scaleX(0.9053);transform-origin:0 0;-webkit-text-stroke:0.6px #dfe4e6;white-space:nowrap;color:#dfe4e6">Connection Status</div>
<div style="position:absolute;left:228.3px;top:447px;font-family:'Liberation Sans',sans-serif;font-weight:normal;font-size:11.5px;line-height:11.5px;transform:scaleX(0.8929);transform-origin:0 0;-webkit-text-stroke:0.6px #0d8530;white-space:nowrap;color:#0d8530">Connected</div>
<div style="position:absolute;left:300px;top:446.5px;font-family:'Liberation Sans',sans-serif;font-weight:normal;font-size:11.5px;line-height:11.5px;transform:scaleX(0.8662);transform-origin:0 0;-webkit-text-stroke:0.6px #dfe4e6;white-space:nowrap;color:#dfe4e6">IP Address</div>
<div style="position:absolute;left:402.3px;top:447.5px;font-family:'Liberation Sans',sans-serif;font-weight:normal;font-size:11.5px;line-height:11.5px;transform:scaleX(0.8968);transform-origin:0 0;-webkit-text-stroke:0.6px #dfe4e6;white-space:nowrap;color:#dfe4e6">172.16.3.39</div>
<div style="position:absolute;left:105.7px;top:482.6px;font-family:'Liberation Sans',sans-serif;font-weight:normal;font-size:13px;line-height:13px;transform:scaleX(0.9475);transform-origin:0 0;-webkit-text-stroke:0.55px #eef2f2;white-space:nowrap;color:#eef2f2">Offline Import</div>
<div style="position:absolute;left:230px;top:482.6px;font-family:'Liberation Sans',sans-serif;font-weight:normal;font-size:13px;line-height:13px;transform:scaleX(0.9423);transform-origin:0 0;-webkit-text-stroke:0.55px #eef2f2;white-space:nowrap;color:#eef2f2">Calibrate</div>
<div style="position:absolute;left:300px;top:484.5px;font-family:'Liberation Sans',sans-serif;font-weight:normal;font-size:11.5px;line-height:11.5px;transform:scaleX(0.9078);transform-origin:0 0;-webkit-text-stroke:0.6px #dfe4e6;white-space:nowrap;color:#dfe4e6">Calibration Status</div>
<div style="position:absolute;left:394.4px;top:484.5px;font-family:'Liberation Sans',sans-serif;font-weight:normal;font-size:11.5px;line-height:11.5px;transform:scaleX(0.8878);transform-origin:0 0;-webkit-text-stroke:0.6px #ff1a1a;white-space:nowrap;color:#ff1a1a">Not Calibrated</div>
</body></html>
